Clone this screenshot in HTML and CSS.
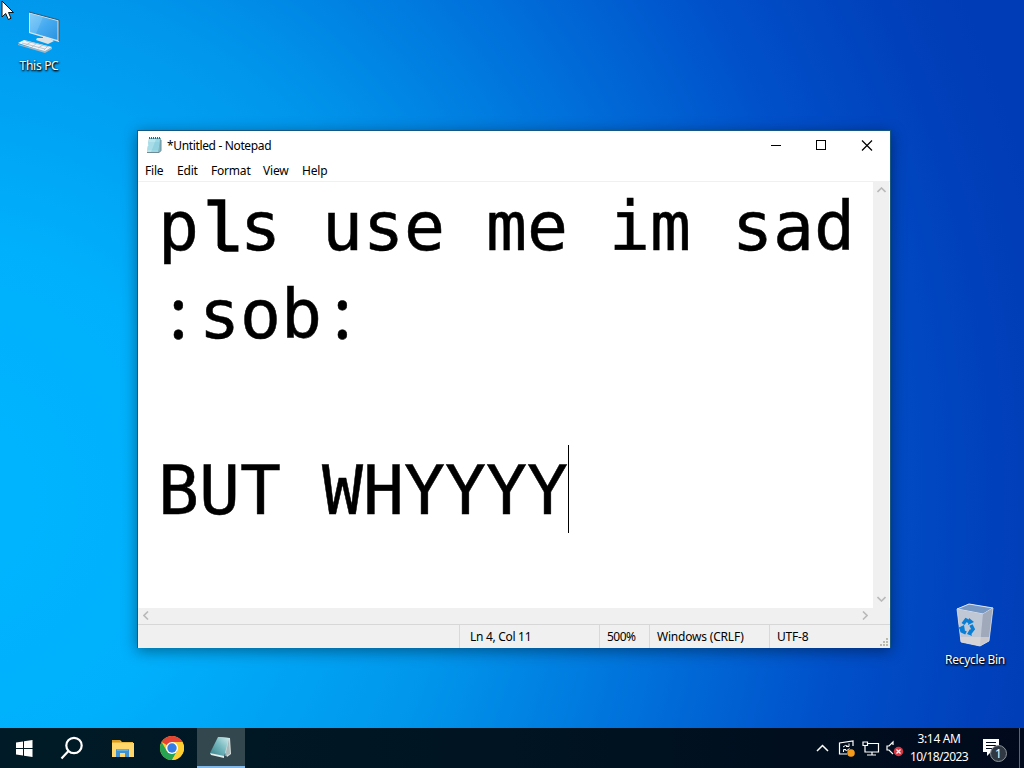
FILE: index.html
```
<!DOCTYPE html>
<html lang="en">
<head>
<meta charset="utf-8">
<title>Desktop</title>
<link rel="stylesheet" href="styles.css">
</head>
<body>
<main class="desktop">
  <div class="shortcut shortcut-pc">
    <svg width="44" height="44" viewBox="0 0 44 44">
      <defs><linearGradient id="screen" x1="0" y1="0" x2="1" y2="1"><stop offset="0" stop-color="#7cc8f6"/><stop offset=".5" stop-color="#45aaf0"/><stop offset="1" stop-color="#2b93e0"/></linearGradient></defs>
      <path d="M11 3 41 11V33L11 24Z" fill="#d9e5eb"/>
      <path d="M11 3 41 11V32" fill="none" stroke="#35566b" stroke-width="1"/>
      <path d="M12 4.500 39.500 12V31L12 23Z" fill="url(#screen)"/>
      <path d="M12 4.500 25 8 18 24.700 12 23Z" fill="#a7e0ff" opacity=".25"/>
      <path d="M25 27 31 29 36 32 30 35 18 31 19 29 25 29Z" fill="#dce3e7"/>
      <path d="M0 34 6 31 34 38 27 43Z" fill="#f1f4f6"/>
      <path d="M0 35 27 42 34 38V40L27 44 0 36Z" fill="#9fb6c6"/>
      <path d="M4 34 27 40M8 32 31 38M8 36 13 33M14 38 19 34M20 39 25 36M26 41 30 37" stroke="#aebdc8" stroke-width=".8"/>
    </svg>
    <span>This PC</span>
  </div>
  <div class="shortcut shortcut-bin">
    <svg width="44" height="46" viewBox="0 0 44 46">
      <path d="M4 6 16 1 40 5 36 38 27 43 8 39Z" fill="#aebdd0"/>
      <path d="M4 6 16 1 40 5 30 11Z" fill="#7898c4" stroke="#dfe7ef" stroke-width="1"/>
      <path d="M4 6 30 11 27 43 8 39Z" fill="#c0c8d5"/>
      <path d="M30 11 40 5 36 38 27 43Z" fill="#a0a9ba"/>
      <path d="M7 34 36 34 36 38 27 43 8 39Z" fill="#e0d9d5" opacity=".65"/>
      <path d="M4 6 8 39 27 43 36 38 40 5" fill="none" stroke="#d5dce6" stroke-width=".8"/>
      <g fill="none" stroke="#087fd5" stroke-width="3.600"><path d="M10 21 13 17 17 19"/><path d="M18 22 20 26 17 30"/><path d="M13 30 9 28 8 24"/></g>
      <g fill="#087fd5"><path d="m16 15 5 4-6 3Z"/><path d="m17 26-3 5 5 2Z"/><path d="m5 25 6-3 1 6Z"/></g>
    </svg>
    <span>Recycle Bin</span>
  </div>

  <section class="window">
    <header class="titlebar">
      <svg class="title-icon" width="16" height="18" viewBox="0 0 16 18">
        <path d="M3 2H15V15L13 17H1Z" fill="#7fb6c3"/><path d="M3 3H14L12 16H1Z" fill="#9bd8e5"/><path d="M3 3H10L5 16H1Z" fill="#c4edf3" opacity=".7"/><path d="M1 16.500H13L15 14.500V4" fill="none" stroke="#708b96"/><path d="M3 2H15" stroke="#405f68" stroke-width="2" stroke-dasharray="1 1"/><path d="M3 7H13M3 9H13M2 11H12M2 13H12" stroke="#79c0d1" stroke-width=".5"/>
      </svg>
      <h1>*Untitled - Notepad</h1>
      <svg class="controls" width="136" height="30" viewBox="0 0 136 30" fill="none" stroke="#000" stroke-width="1">
        <path d="M17 15.500H27"/><rect x="62.500" y="10.500" width="9" height="9"/><path d="m108 10.500 10 10M118 10.500l-10 10" stroke-width="1.200"/>
      </svg>
    </header>
    <nav class="menu"><span class="m-file">File</span><span class="m-edit">Edit</span><span class="m-format">Format</span><span class="m-view">View</span><span class="m-help">Help</span></nav>
    <div class="editor">
      <div class="text"><p>p<span class="ell">l</span>s use me im sad</p><p><span class="colon">:</span>sob<span class="colon">:</span></p><p>&nbsp;</p><p>BUT WHYYYY<i class="caret"></i></p></div>
      <div class="vscroll">
        <svg width="9" height="6" viewBox="0 0 9 6"><path d="M.5 5 4.500 1 8.500 5"/></svg>
        <svg width="9" height="6" viewBox="0 0 9 6"><path d="M.5 1 4.500 5 8.500 1"/></svg>
      </div>
    </div>
    <div class="hscroll">
      <svg width="6" height="9" viewBox="0 0 6 9"><path d="M5 .5 1 4.500 5 8.500"/></svg>
      <svg width="6" height="9" viewBox="0 0 6 9"><path d="M1 .5 5 4.500 1 8.500"/></svg>
    </div>
    <footer class="status">
      <span></span><span class="s-pos">Ln 4, Col 11</span><span class="s-zoom">500%</span><span class="s-eol">Windows (CRLF)</span><span class="s-enc">UTF-8</span>
      <svg class="grip" width="9" height="9" viewBox="0 0 9 9" fill="#bcb9ad"><path d="M6 0h2v2H6ZM3 3h2v2H3ZM6 3h2v2H6ZM0 6h2v2H0ZM3 6h2v2H3ZM6 6h2v2H6Z"/></svg>
    </footer>
  </section>
</main>

<footer class="taskbar">
  <div class="task"><svg width="17" height="17" viewBox="0 0 17 17" fill="#fff"><path d="M0 2.500 7 1.500V8H0ZM8 1.300 16.500 0V8H8ZM0 9H7V15.500L0 14.500ZM8 9H16.500V17L8 15.700Z"/></svg></div>
  <div class="task"><svg width="24" height="24" viewBox="0 0 24 24" fill="none" stroke="#fff" stroke-width="2.200"><circle cx="14" cy="9.500" r="7.700"/><path d="m8.500 15-7 7.500"/></svg></div>
  <div class="task task-files"><svg width="22" height="19" viewBox="0 0 22 19"><path d="M0 1H8L10 3H21V18H0Z" fill="#eeb63c"/><path d="M0 4H22V18H0Z" fill="#ffd76c"/><path d="M0 1H8V3H0Z" fill="#d99b24"/><path d="M4 18V11Q4 10 5 10H16Q17 10 17 11V18H13V14H8V18Z" fill="#3f91cf"/><path d="M5 10H16V12H5Z" fill="#62afe2"/></svg></div>
  <div class="task"><svg width="24" height="24" viewBox="0 0 24 24"><circle cx="12" cy="12" r="12" fill="#ffcf32"/><path d="M12 12 1.600 6A12 12 0 0 1 22.400 6H12Z" fill="#e44335"/><path d="M1.600 6A12 12 0 0 0 12 24L17.200 15 12 12 6.800 15Z" fill="#26a451"/><path d="M12 6H22.400A12 12 0 0 1 12 24L17.200 15Z" fill="#ffcf32"/><circle cx="12" cy="12" r="6" fill="#fff"/><circle cx="12" cy="12" r="4.700" fill="#347de4"/></svg></div>
  <div class="task task-active"><svg width="24" height="24" viewBox="0 0 24 24"><defs><linearGradient id="note" x1="0" x2="1" y1="1" y2="0"><stop offset="0" stop-color="#347d86"/><stop offset=".55" stop-color="#76b9bf"/><stop offset="1" stop-color="#d0ecec"/></linearGradient></defs><path d="M9 2 21 3 22 19 18 22Z" fill="#d9dfdd"/><path d="M9 2 20 3 15 22 1 18Z" fill="url(#note)"/><path d="M1 18 15 21V23L2 20Z" fill="#e4eeec"/><path d="M20 4 16 21 21 19Z" fill="#a9b9b9"/></svg></div>
  <div class="tray">
    <svg class="tray-icons" width="90" height="24" viewBox="0 0 90 24" fill="none" stroke="#fff" stroke-width="1.200">
      <path d="m1 15 5.500-5.500L12 15" stroke-width="1.500"/>
      <path d="M37 10V5L23.500 7V18H31"/><path d="M27 11Q29.500 8 32.500 10.500M33 7.500V10.500H30M33.500 12.500Q31 16 28 13.500M27.500 16V13.500H30" stroke-width="1"/><circle cx="35" cy="17" r="3.800" fill="#f59b1c" stroke="none"/>
      <path d="M52 7.500H62.500V16H49V11M56 16V19M51 19H60M47 6H51.500V9.500H47ZM49 10V13"/>
      <path d="M77 9V6L73 10H71V14H73L77 18"/><circle cx="82.500" cy="15.500" r="4.700" fill="#d93644" stroke="none"/><path d="m80.500 13.500 4 4M84.500 13.500l-4 4"/>
    </svg>
    <div class="clock"><span class="time">3:14 AM</span><span class="date">10/18/2023</span></div>
    <div class="action">
      <svg width="16" height="18" viewBox="0 0 16 18"><path d="M0 0H16V13H8L4 17V13H0Z" fill="#fff"/><path d="M3 3.500H13M3 6.500H13M3 9.500H10" stroke="#000a1c"/></svg>
      <b class="badge">1</b>
    </div>
    <i class="peek"></i>
  </div>
</footer>
<svg class="pointer" width="14" height="21" viewBox="0 0 14 21"><path d="M1 1V17L4.700 13.500 7.300 19.500 10 18.300 7.500 12.500H12.500Z" fill="#fff" stroke="#111"/></svg>
</body>
</html>
```
FILE: styles.css
```
* { box-sizing: border-box; }
body {
  margin: 0; width: 1024px; height: 768px; overflow: hidden;
  display: flex; flex-direction: column;
  font: 12px/16px "Noto Sans", "Open Sans", sans-serif;
  background: radial-gradient(ellipse 1120px 1180px at -50px 500px, #00b6ff 0%, #00b0fc 22%, #0096ec 45%, #0074dc 62%, #0050ca 80%, #0040ba 94%, #003cb5 100%);
}
h1, p { margin: 0; font: inherit; }
svg { display: block; flex: none; }
.desktop { position: relative; flex: 1; }

.shortcut { position: absolute; display: flex; flex-direction: column; align-items: center; color: #fff; text-shadow: 1px 1px 2px #000, 0 1px 2px #000; white-space: nowrap; }
.shortcut-pc { left: 2px; top: 9px; width: 74px; }
.shortcut-pc svg { margin-left: 2px; }
.shortcut-pc span { margin-top: 5px; letter-spacing: -.3px; }
.shortcut-bin { left: 938px; top: 603px; width: 74px; }
.shortcut-bin span { margin-top: 3px; letter-spacing: -.3px; }

.window {
  position: absolute; left: 137px; top: 130px; width: 754px; height: 518px;
  display: flex; flex-direction: column; border: 1px solid #17577f; background: #fff;
  box-shadow: 0 3px 14px rgba(0, 0, 0, .42); color: #000;
}
.titlebar { height: 30px; display: flex; align-items: center; padding-left: 8px; flex: none; }
.titlebar h1 { margin-left: 5px; flex: 1; letter-spacing: -.35px; }
.title-icon { margin-top: -2px; }
.controls { margin-top: -2px; }
.menu { height: 20px; display: flex; padding-left: 7px; flex: none; line-height: 19px; }
.m-file { width: 32px; } .m-edit { width: 34px; } .m-format { width: 52px; } .m-view { width: 39px; }
.menu span { letter-spacing: -.2px; }
.editor { height: 427px; display: flex; flex: none; box-shadow: inset 0 1px #f0f0f0; }
.text { flex: 1; padding: 2px 0 0 20px; font: 68.100px/88px "DejaVu Sans Mono", monospace; white-space: pre; -webkit-text-stroke: .5px #000; }
.text p { height: 88px; display: flex; }
.ell { width: 41px; margin-top: 5px; font: 71px/88px "Liberation Mono", monospace; -webkit-text-stroke: 1.500px #000; }
.colon { width: 41px; margin-top: -4px; font: 72px/88px "Noto Sans", sans-serif; text-align: center; }
.caret { width: 1px; height: 88px; margin-top: -2px; background: #000; }
.vscroll { width: 16px; margin-right: 1px; background: #f0f0f0; display: flex; flex-direction: column; align-items: center; justify-content: space-between; padding: 6px 0; }
.hscroll { height: 16px; flex: none; background: #f0f0f0; display: flex; align-items: center; justify-content: space-between; padding: 0 22px 1px 5px; }
.vscroll path, .hscroll path { fill: none; stroke: #b9b9b9; stroke-width: 1.600; }
.status { flex: 1; display: grid; grid-template-columns: 321px 140px 50px 120px 1fr; position: relative; background: #f0f0f0; border-top: 1px solid #d7d7d7; line-height: 23px; }
.status span + span { border-left: 1px solid #d9d9d9; padding-left: 7px; white-space: nowrap; }
.status .s-pos { padding-left: 10px; letter-spacing: -.3px; }
.s-zoom { letter-spacing: -.5px; } .s-eol { letter-spacing: -.2px; } .s-enc { letter-spacing: -.2px; }
.grip { position: absolute; right: 1px; bottom: 1px; }

.taskbar { height: 40px; display: flex; background: linear-gradient(90deg, #001b27, #001421 50%, #000a1c); color: #fff; }
.task { width: 48px; margin-right: 1px; display: flex; align-items: center; justify-content: center; }
.task:first-child { margin-right: 0; }
.task-files { margin-left: 2px; }
.task-active { background: #33474f; border-bottom: 2px solid #83b9e8; }
.tray { margin-left: auto; display: flex; align-items: center; }
.clock { width: 60px; display: flex; flex-direction: column; align-items: center; line-height: 18px; margin-right: 14px; margin-left: 3px; white-space: nowrap; }
.time { letter-spacing: -.35px; } .date { letter-spacing: -.6px; }
.action { position: relative; width: 36px; }
.badge { position: absolute; left: 7px; top: 6px; width: 17px; height: 17px; border: 1px solid #8c9299; border-radius: 50%; background: #303943; font: 12px/15px "Noto Sans", sans-serif; text-align: center; }
.peek { width: 5px; height: 40px; border-left: 1px solid #5c6573; }
.pointer { position: absolute; left: 1px; top: 0; }
```
